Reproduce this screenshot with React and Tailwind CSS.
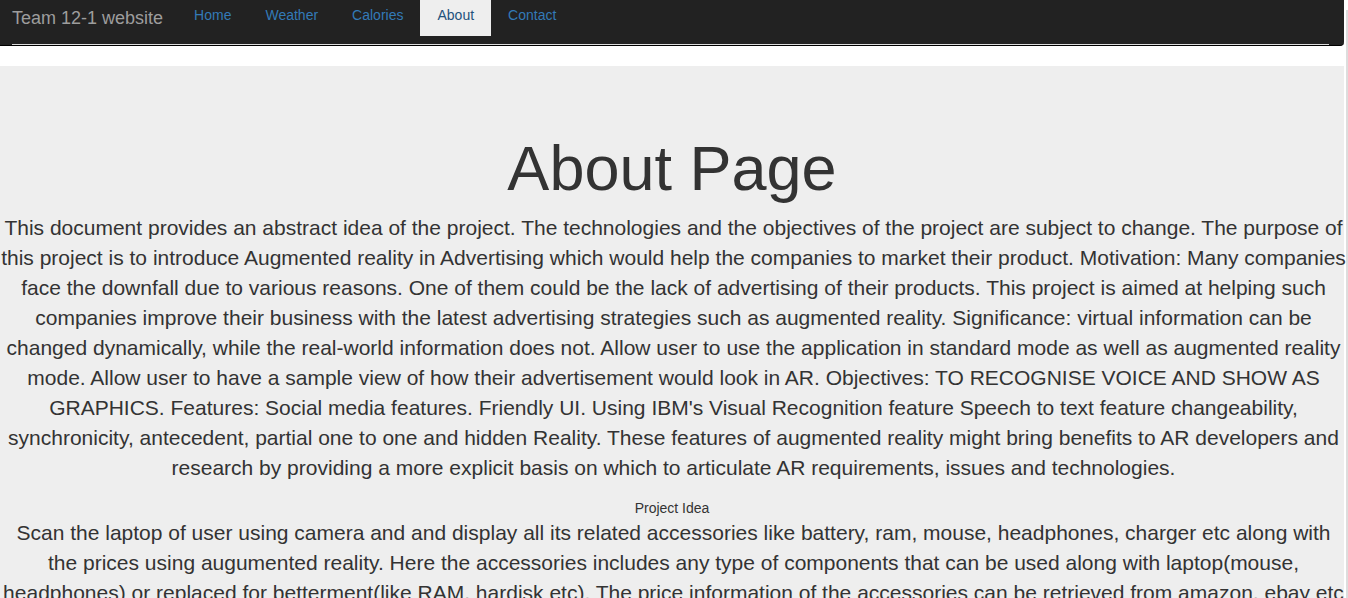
import React from "react";

const links = ["Home", "Weather", "Calories", "About", "Contact"];

const about =
  "This document provides an abstract idea of the project. The technologies and the objectives of the project are subject to change. The purpose of this project is to introduce Augmented reality in Advertising which would help the companies to market their product. Motivation: Many companies face the downfall due to various reasons. One of them could be the lack of advertising of their products. This project is aimed at helping such companies improve their business with the latest advertising strategies such as augmented reality. Significance: virtual information can be changed dynamically, while the real-world information does not. Allow user to use the application in standard mode as well as augmented reality mode. Allow user to have a sample view of how their advertisement would look in AR. Objectives: TO RECOGNISE VOICE AND SHOW AS GRAPHICS. Features: Social media features. Friendly UI. Using IBM's Visual Recognition feature Speech to text feature changeability, synchronicity, antecedent, partial one to one and hidden Reality. These features of augmented reality might bring benefits to AR developers and research by providing a more explicit basis on which to articulate AR requirements, issues and technologies.";

const idea =
  "Scan the laptop of user using camera and and display all its related accessories like battery, ram, mouse, headphones, charger etc along with the prices using augumented reality. Here the accessories includes any type of components that can be used along with laptop(mouse, headphones) or replaced for betterment(like RAM, hardisk etc). The price information of the accessories can be retrieved from amazon, ebay etc and shown to the user so that the user can compare and buy the best one.";

export default function App() {
  return (
    <div
      className="flex h-[598px] overflow-hidden bg-white text-[#333]"
      style={{ fontFamily: '"Liberation Sans", Arial, sans-serif' }}
    >
      <div className="w-[1344px] shrink-0">
        <nav className="h-[46px] bg-[#222] border-b border-black rounded-br-[4px]">
          <div className="flex h-[43px] items-start">
            <a className="pl-3 pr-[14px] pt-[8px] text-[18px] leading-[20px] text-[#9d9d9d]">
              Team 12-1 website
            </a>
            <ul className="flex">
              {links.map((l) => (
                <li key={l}>
                  <a
                    className={
                      l === "About"
                        ? "block px-[17px] pt-[5px] pb-[11px] text-[14px] leading-[20px] bg-[#eee] text-[#23527c]"
                        : "block px-[17px] pt-[5px] pb-[11px] text-[14px] leading-[20px] text-[#337ab7]"
                    }
                  >
                    {l}
                  </a>
                </li>
              ))}
            </ul>
          </div>
          <div className="h-px ml-3 mr-[15px] mt-px bg-[#ddd]" />
        </nav>

        <div className="mt-5 bg-[#eee] pt-12 text-center">
          <h1 className="mt-5 mb-[10px] text-[63px] leading-[1.1]">About Page</h1>
          <p className="mb-[15px] -mr-[3px] text-[21px] leading-[30px]">{about}</p>
          <div className="text-[14px] leading-[20px]">Project Idea</div>
          <p className="-mr-[3px] text-[21px] leading-[30px]">{idea}</p>
        </div>
      </div>
      <div className="w-[4px] border-r-2 border-[#ddd] mt-[10px]" />
    </div>
  );
}
